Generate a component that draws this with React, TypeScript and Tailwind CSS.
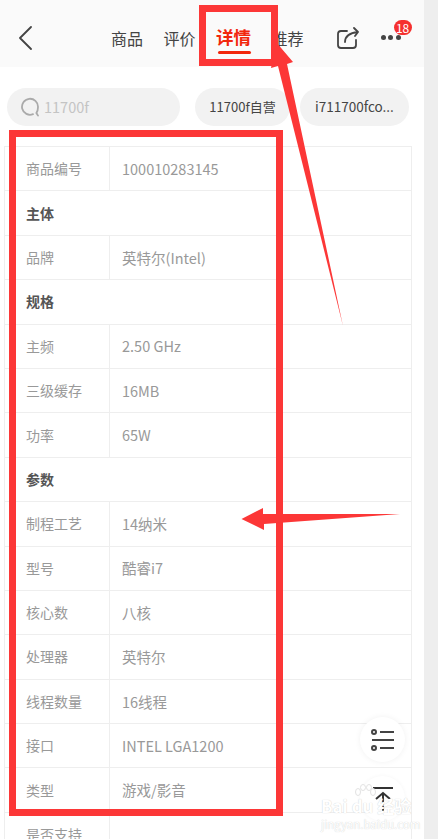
const font = "font-['Noto_Sans_CJK_SC','Noto_Sans',sans-serif]";

type Row = { label: string; value?: string };

const rows: Row[] = [
  { label: "商品编号", value: "100010283145" },
  { label: "主体" },
  { label: "品牌", value: "英特尔(Intel)" },
  { label: "规格" },
  { label: "主频", value: "2.50 GHz" },
  { label: "三级缓存", value: "16MB" },
  { label: "功率", value: "65W" },
  { label: "参数" },
  { label: "制程工艺", value: "14纳米" },
  { label: "型号", value: "酷睿i7" },
  { label: "核心数", value: "八核" },
  { label: "处理器", value: "英特尔" },
  { label: "线程数量", value: "16线程" },
  { label: "接口", value: "INTEL LGA1200" },
  { label: "类型", value: "游戏/影音" },
];

function SpecRow({ label, value }: Row) {
  if (!value) {
    return (
      <div className="flex h-[44.4px] items-center border-b border-[#eeeeee] pl-[21px] text-[14px] font-bold text-[#555555]">
        {label}
      </div>
    );
  }
  return (
    <div className="flex h-[44.4px] border-b border-[#eeeeee] text-[#999999]">
      <div className="flex w-[105px] items-center border-r border-[#eeeeee] pl-[21px] text-[14px] whitespace-nowrap">
        {label}
      </div>
      <div className="flex items-center pl-[12px] text-[14.5px] whitespace-nowrap">{value}</div>
    </div>
  );
}

function Annotations() {
  return (
    <>
      <div className="absolute left-[199px] top-[5px] h-[61px] w-[79px] border-[7px] border-[#fc3737]" />
      <div className="absolute left-[9px] top-[130px] h-[686px] w-[274px] border-[7px] border-[#fc3737]" />
      <svg className="absolute left-0 top-0" width="438" height="839" fill="#fc3737">
        <polygon points="276,42 293,62 287,64 343,326 278,66 271,68" />
        <polygon points="241.5,519 263,508 263,514 400,514 264,524 264,530" />
      </svg>
    </>
  );
}

function Watermark() {
  return (
    <div className="absolute left-[321px] top-[784px] w-[88px] text-center leading-none text-white [text-shadow:0_0_1px_#c4c4c4]">
      <svg className="absolute left-[33px] top-[0px]" width="22" height="14" viewBox="0 0 22 14" fill="#ffffff" stroke="#e2e2e2" strokeWidth="1">
        <ellipse cx="4" cy="8" rx="2.5" ry="3.5" />
        <ellipse cx="9" cy="3.5" rx="2.5" ry="3" />
        <ellipse cx="15" cy="3.5" rx="2.5" ry="3" />
        <ellipse cx="19" cy="8" rx="2.5" ry="3.5" />
      </svg>
      <div className="mt-[13px] text-[17px] font-bold whitespace-nowrap">Bai du 经验</div>
      <div className="mt-[5px] text-[11.5px] whitespace-nowrap">jingyan.baidu.com</div>
    </div>
  );
}

export default function App() {
  return (
    <div className={`relative h-[839px] w-[438px] overflow-hidden bg-[#eeeeee] ${font}`}>
      <div className="h-full w-[424px] bg-white">
        <div className="flex h-[67px] items-center bg-[#fafafa] pt-[8px]">
          <svg className="ml-[18px]" width="14" height="24" viewBox="0 0 14 24" fill="none" stroke="#444444" strokeWidth="1.8" strokeLinecap="round" strokeLinejoin="round">
            <path d="M13 1 2 12l11 11" />
          </svg>
          <div className="ml-[79px] flex items-center gap-[20.5px] text-[16px] text-[#444444]">
            <span>商品</span>
            <span>评价</span>
            <span className="relative text-[17.5px] font-bold text-[#f2270c]">
              详情
              <span className="absolute bottom-[-3px] left-[2px] h-[3px] w-[33px] rounded-full bg-[#f2270c]" />
            </span>
            <span>推荐</span>
          </div>
          <svg className="ml-[33px]" width="23" height="22" viewBox="0 0 23 22" fill="none" stroke="#444444" strokeWidth="1.8" strokeLinecap="round" strokeLinejoin="round">
            <path d="M10 4H4a3 3 0 0 0-3 3v11a3 3 0 0 0 3 3h12a3 3 0 0 0 3-3v-5" />
            <path d="M8 15c0-5 4-9 13-10M17 1l4 4-3 4" />
          </svg>
          <div className="relative ml-[21px] flex gap-[2.5px]">
            <span className="h-[5px] w-[5px] rounded-full bg-[#444444]" />
            <span className="h-[5px] w-[5px] rounded-full bg-[#444444]" />
            <span className="h-[5px] w-[5px] rounded-full bg-[#444444]" />
            <span className="absolute left-[13px] top-[-15px] flex h-[15px] w-[18px] items-center justify-center rounded-full bg-[#f5302f] text-[12px] text-white">
              18
            </span>
          </div>
        </div>

        <div className="flex h-[79px] items-center pl-[7px]">
          <div className="flex h-[38px] w-[173px] items-center rounded-full bg-[#f2f2f2] pl-[14px] text-[14.5px] text-[#c4c4c4]">
            <svg width="19" height="20" viewBox="0 0 19 20" fill="none" stroke="#aaaaaa" strokeWidth="1.8" strokeLinecap="round">
              <path d="M12 17.2A8 8 0 1 1 17 10c0 2.6-.6 4.6-1.6 6l1.6 2.6" />
            </svg>
            <span className="ml-[4px]">11700f</span>
          </div>
          <div className="ml-[15px] flex h-[38px] w-[95px] items-center justify-center rounded-full bg-[#f2f2f2] text-[13px] text-[#444444]">
            11700f自营
          </div>
          <div className="ml-[10px] flex h-[38px] w-[109px] items-center justify-center rounded-full bg-[#f2f2f2] text-[13.5px] text-[#444444]">
            i711700fco...
          </div>
        </div>

        <div className="ml-[4px] w-[408px] border-x border-t border-[#eeeeee]">
          {rows.map((r) => (
            <SpecRow key={r.label} {...r} />
          ))}
          <div className="flex h-[60px] text-[14px] text-[#999999]">
            <div className="w-[105px] border-r border-[#eeeeee] pl-[21px] pt-[11px] whitespace-nowrap">是否支持</div>
          </div>
        </div>
      </div>

      <div className="absolute left-[360px] top-[717px] flex h-[45px] w-[45px] items-center justify-center rounded-full bg-white shadow-[0_0_6px_rgba(0,0,0,0.06)]">
        <svg width="24" height="22" viewBox="0 0 24 22" fill="none" stroke="#444444" strokeWidth="2">
          <circle cx="3" cy="3" r="2" />
          <path d="M9 3h14M1 11h22M9 19h14" />
          <circle cx="3" cy="19" r="2" />
        </svg>
      </div>
      <div className="absolute left-[360px] top-[776px] flex h-[45px] w-[45px] items-center justify-center rounded-full bg-white shadow-[0_0_4px_rgba(0,0,0,0.04)]">
        <svg width="22" height="26" viewBox="0 0 22 26" fill="none" stroke="#333333" strokeWidth="2">
          <path d="M1 2h20M11 7v18M4 13l7-6 7 6" />
        </svg>
      </div>

      <Watermark />
      <Annotations />
    </div>
  );
}
